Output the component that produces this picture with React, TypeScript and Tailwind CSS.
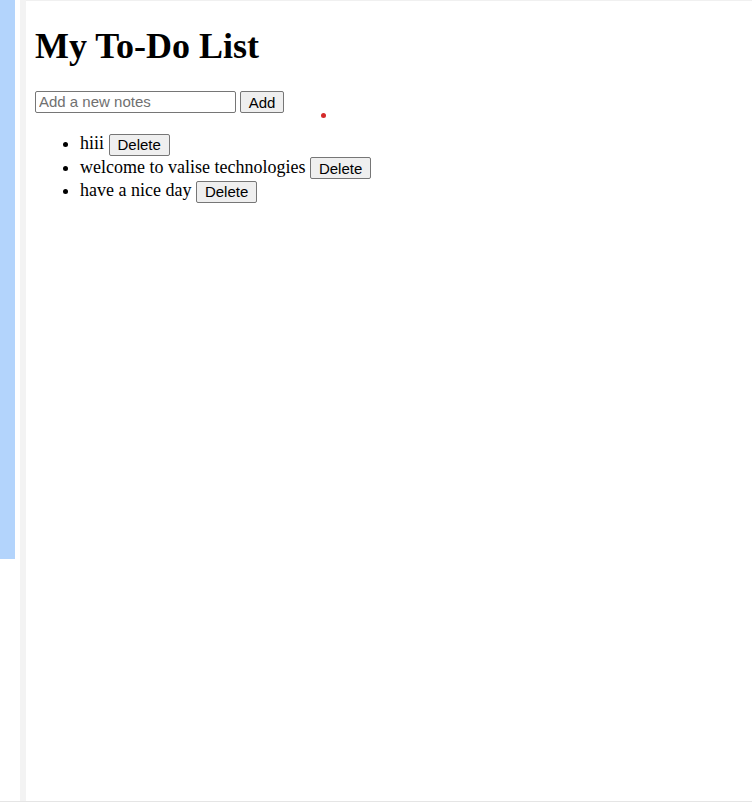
export default function App() {
  const notes = ["hiii", "welcome to valise technologies", "have a nice day"];

  return (
    <div className="flex h-[802px] w-[752px] border-b border-[#e5e5e5] bg-white font-['Liberation_Serif',serif] text-black">
      {/* left rails */}
      <div className="flex w-[26px] shrink-0">
        <div className="h-[559px] w-[15px] bg-[#b3d4fc]" />
        <div className="w-[5px]" />
        <div className="h-full w-[6px] bg-[#f3f3f3]" />
      </div>

      <div className="relative flex-1 border-t border-[#f0f0f0] pl-[9px]">
        <h1 className="mt-[25px] mb-[24px] text-[36px] leading-[41px] font-bold">My To-Do List</h1>

        <div className="flex h-[22px] items-center gap-[4px]">
          <input
            placeholder="Add a new notes"
            className="h-[22px] w-[201px] rounded-[2px] border border-[#767676] px-[3px] font-['Liberation_Sans',sans-serif] text-[15px] placeholder:text-[#707070]"
          />
          <button className="h-[22px] w-[44px] rounded-[2px] border border-[#767676] bg-[#efefef] font-['Liberation_Sans',sans-serif] text-[15px] leading-none">
            Add
          </button>
        </div>

        <span className="absolute top-[112px] left-[295px] h-[5px] w-[5px] rounded-full bg-[#d42a2a]" />

        <ul className="mt-[18px] list-disc pl-[45px] text-[18px]">
          {notes.map((n) => (
            <li key={n} className="h-[23.5px] pt-[1px] leading-[23.5px]">
              {n}{" "}
              <button className="h-[22px] rounded-[2px] border border-[#767676] bg-[#efefef] px-[8px] align-middle font-['Liberation_Sans',sans-serif] text-[15px] leading-none">
                Delete
              </button>
            </li>
          ))}
        </ul>
      </div>
    </div>
  );
}
